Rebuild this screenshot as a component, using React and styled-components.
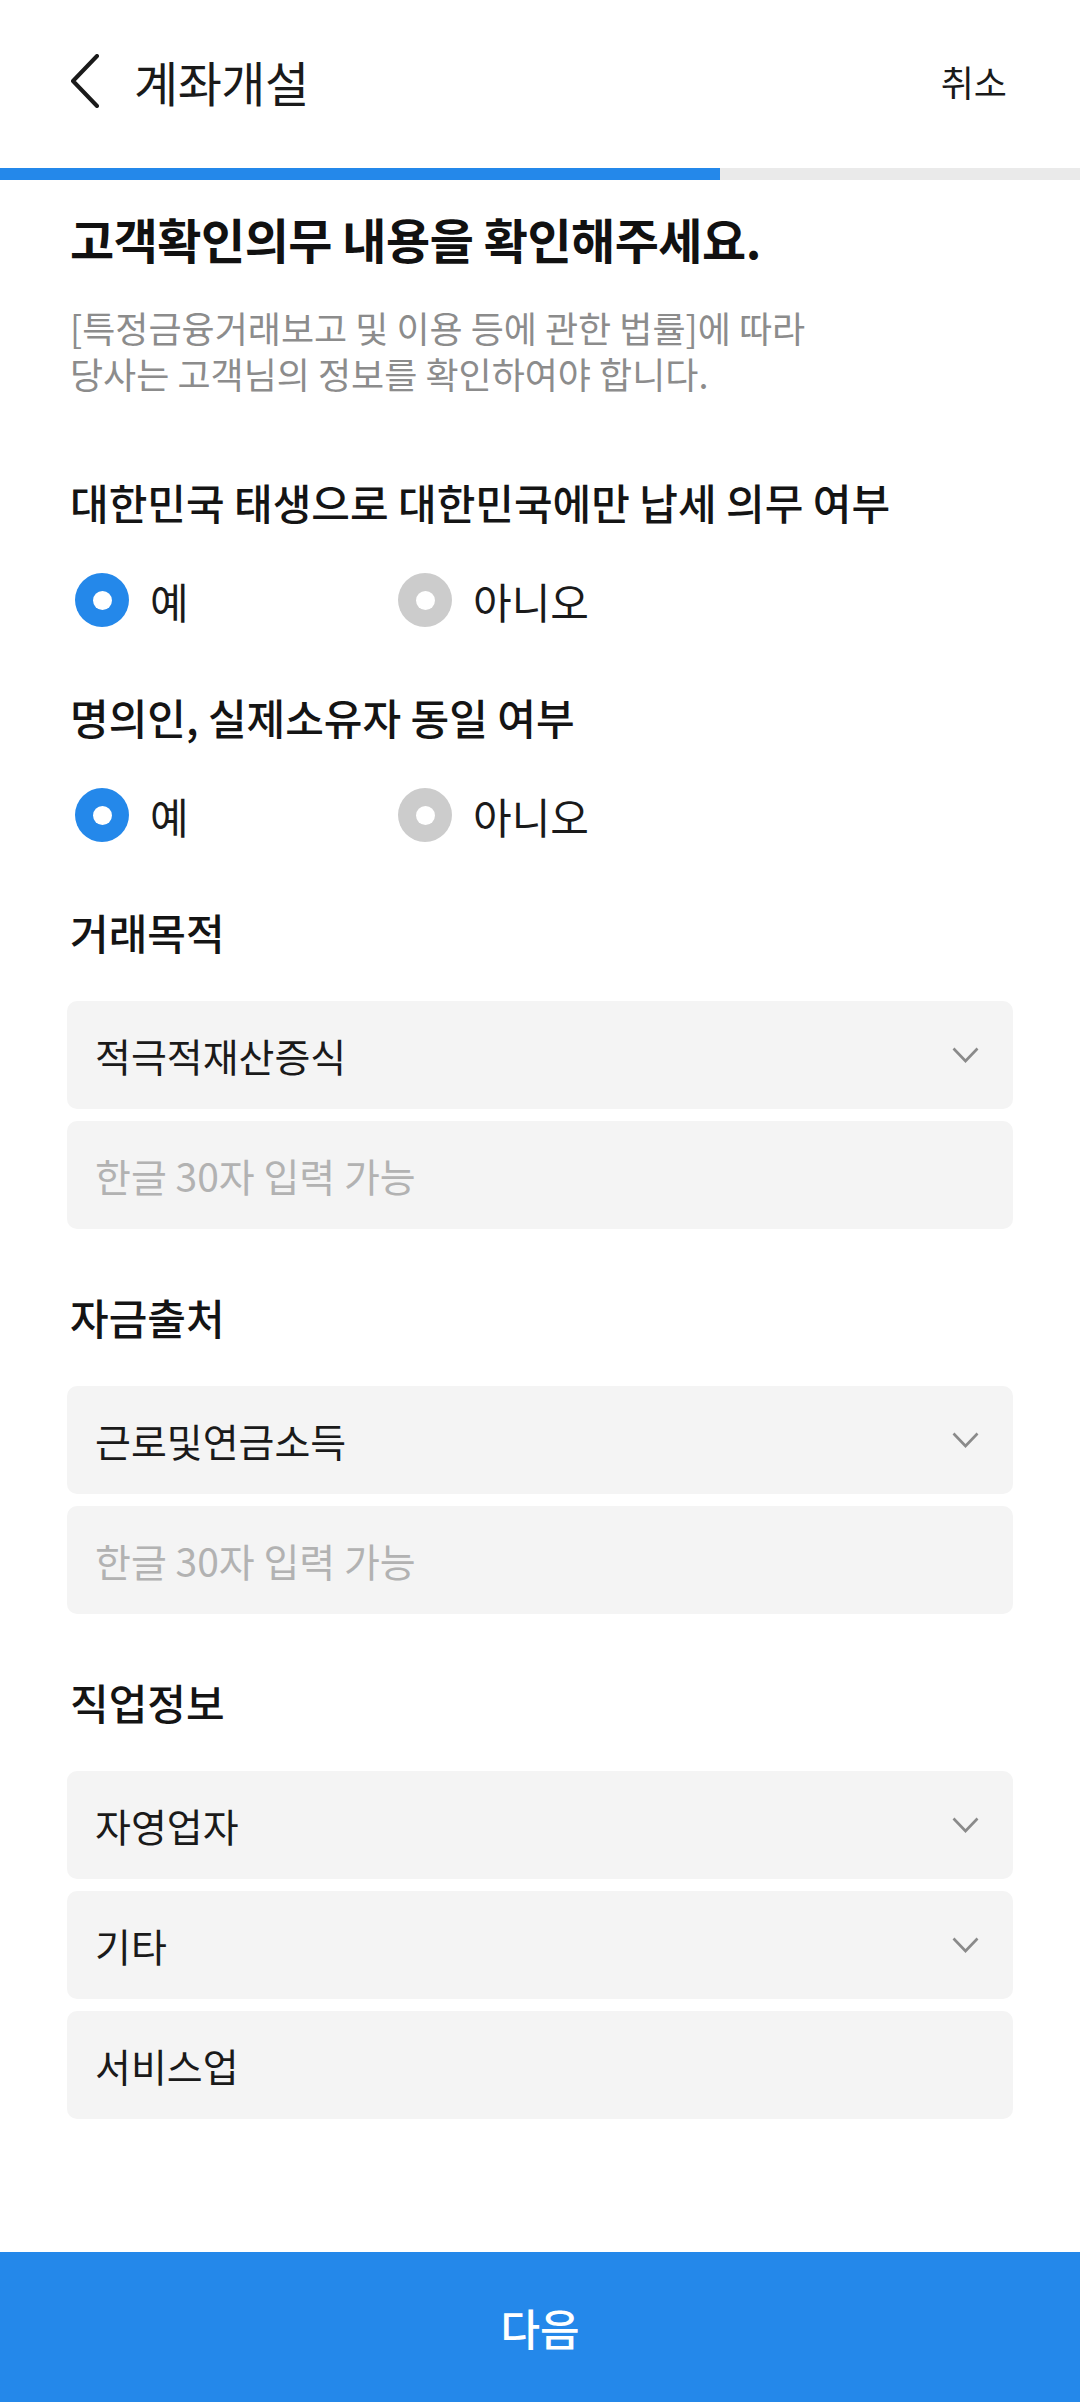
import React, { useState } from "react";
import styled, { createGlobalStyle } from "styled-components";

const GlobalStyle = createGlobalStyle`
  html, body {
    margin: 0;
    padding: 0;
    background: #ffffff;
  }
  body {
    font-family: "Noto Sans CJK KR", "Noto Sans", sans-serif;
    color: #1a1a1a;
  }
  * { box-sizing: border-box; }
`;

const Page = styled.div`
  display: flex;
  flex-direction: column;
  min-height: 100vh;
  background: #fff;
`;

const Header = styled.header`
  display: flex;
  align-items: center;
  height: 168px;
  padding: 0 73px 6px 70px;
`;

const BackButton = styled.button`
  display: flex;
  align-items: center;
  border: 0;
  background: none;
  padding: 0;
  margin-right: 34px;
  cursor: pointer;
`;

const HeaderTitle = styled.h1`
  flex: 1;
  margin: 0;
  font-size: 48px;
  font-weight: 400;
  letter-spacing: -0.5px;
  color: #1a1a1a;
`;

const CancelButton = styled.button`
  border: 0;
  background: none;
  padding: 0;
  font-family: inherit;
  font-size: 36px;
  color: #1a1a1a;
`;

const Progress = styled.div`
  height: 12px;
  background: #eaeaea;
`;

const ProgressFill = styled.div`
  height: 100%;
  background: #2488ea;
`;

const Content = styled.main`
  display: flex;
  flex-direction: column;
  padding: 26px 67px 0;
`;

const Heading = styled.h2`
  margin: 0;
  padding-left: 3px;
  font-size: 48px;
  line-height: 64px;
  font-weight: 700;
  letter-spacing: -0.5px;
  color: #111;
`;

const Description = styled.p`
  margin: 34px 0 18px;
  padding-left: 3px;
  font-size: 36px;
  line-height: 46px;
  color: #8c8c8c;
`;

const Section = styled.section`
  margin-top: 61px;
`;

const Label = styled.div`
  padding-left: 3px;
  font-size: 42px;
  line-height: 54px;
  font-weight: 500;
  color: #141414;
`;

const Body = styled.div`
  margin-top: 42px;
  display: flex;
  flex-direction: column;
  gap: 12px;
`;

const RadioGroup = styled.div`
  display: flex;
  height: 58px;
  align-items: center;
  padding-left: 8px;
`;

const RadioOption = styled.label`
  display: flex;
  align-items: center;
  gap: 21px;
  width: 323px;
  font-size: 42px;
  color: #1a1a1a;
  cursor: pointer;
`;

const RadioDot = styled.span`
  position: relative;
  width: 54px;
  height: 54px;
  border-radius: 50%;
  background: ${(p) => (p.$checked ? "#2488ea" : "#cccccc")};
  flex-shrink: 0;
  &::after {
    content: "";
    position: absolute;
    left: 50%;
    top: 50%;
    width: 19px;
    height: 19px;
    margin: -9.5px 0 0 -9.5px;
    border-radius: 50%;
    background: #fff;
  }
`;

const Field = styled.div`
  display: flex;
  align-items: center;
  justify-content: space-between;
  height: 108px;
  padding: 0 34px 0 28px;
  border-radius: 10px;
  background: #f4f4f4;
  font-size: 39px;
  color: ${(p) => (p.$placeholder ? "#b2b2b2" : "#1a1a1a")};
`;

const NextButton = styled.button`
  margin-top: auto;
  height: 150px;
  width: 100%;
  border: 0;
  background: #2488ea;
  color: #fff;
  font-family: inherit;
  font-size: 43px;
  font-weight: 500;
`;

const Spacer = styled.div`
  height: 132px;
`;

const BackIcon = () => (
  <svg width="30" height="54" viewBox="0 0 30 54">
    <path d="M27 2 L3 27 L27 52" fill="none" stroke="#1a1a1a" strokeWidth="4" strokeLinecap="round" strokeLinejoin="round" />
  </svg>
);

const ChevronDown = () => (
  <svg width="27" height="16" viewBox="0 0 27 16">
    <path d="M1.5 1.5 L13.5 14 L25.5 1.5" fill="none" stroke="#8a8a8a" strokeWidth="2.6" />
  </svg>
);

const YesNo = ({ value, onChange }) => (
  <RadioGroup>
    <RadioOption onClick={() => onChange(true)}>
      <RadioDot $checked={value === true} />
      예
    </RadioOption>
    <RadioOption onClick={() => onChange(false)}>
      <RadioDot $checked={value === false} />
      아니오
    </RadioOption>
  </RadioGroup>
);

const Select = ({ children }) => (
  <Field>
    <span>{children}</span>
    <ChevronDown />
  </Field>
);

export default function App() {
  const [taxOnlyKorea, setTaxOnlyKorea] = useState(true);
  const [sameOwner, setSameOwner] = useState(true);

  return (
    <Page>
      <GlobalStyle />
      <Header>
        <BackButton>
          <BackIcon />
        </BackButton>
        <HeaderTitle>계좌개설</HeaderTitle>
        <CancelButton>취소</CancelButton>
      </Header>
      <Progress>
        <ProgressFill style={{ width: `${(2 / 3) * 100}%` }} />
      </Progress>

      <Content>
        <Heading>고객확인의무 내용을 확인해주세요.</Heading>
        <Description>
          [특정금융거래보고 및 이용 등에 관한 법률]에 따라
          <br />
          당사는 고객님의 정보를 확인하여야 합니다.
        </Description>

        <Section>
          <Label>대한민국 태생으로 대한민국에만 납세 의무 여부</Label>
          <Body>
            <YesNo value={taxOnlyKorea} onChange={setTaxOnlyKorea} />
          </Body>
        </Section>

        <Section>
          <Label>명의인, 실제소유자 동일 여부</Label>
          <Body>
            <YesNo value={sameOwner} onChange={setSameOwner} />
          </Body>
        </Section>

        <Section>
          <Label>거래목적</Label>
          <Body>
            <Select>적극적재산증식</Select>
            <Field $placeholder>한글 30자 입력 가능</Field>
          </Body>
        </Section>

        <Section>
          <Label>자금출처</Label>
          <Body>
            <Select>근로및연금소득</Select>
            <Field $placeholder>한글 30자 입력 가능</Field>
          </Body>
        </Section>

        <Section>
          <Label>직업정보</Label>
          <Body>
            <Select>자영업자</Select>
            <Select>기타</Select>
            <Field>서비스업</Field>
          </Body>
        </Section>
        <Spacer />
      </Content>

      <NextButton>다음</NextButton>
    </Page>
  );
}
